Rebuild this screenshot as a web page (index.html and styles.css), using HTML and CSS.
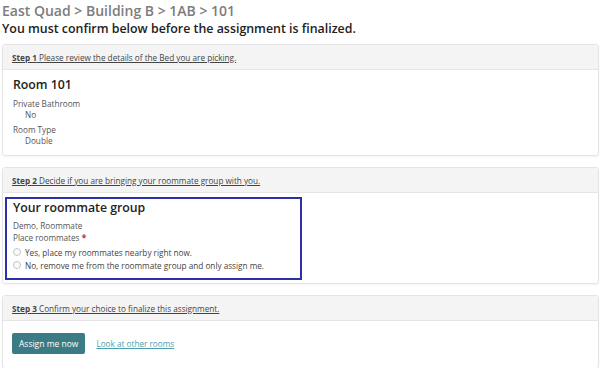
FILE: index.html
```html
<!DOCTYPE html>
<html lang="en">
<head>
  <meta charset="UTF-8">
  <title>Confirm room assignment</title>
  <link rel="stylesheet" href="styles.css">
</head>
<body>
  <h1 class="crumbs">East Quad &gt; Building B &gt; 1AB &gt; 101</h1>
  <h2 class="notice">You must confirm below before the assignment is finalized.</h2>

  <div class="panel">
    <div class="panel-head"><span><b>Step 1</b> Please review the details of the Bed you are picking.</span></div>
    <div class="panel-body room">
      <h3>Room 101</h3>
      <div class="label">Private Bathroom</div>
      <div class="value">No</div>
      <div class="label">Room Type</div>
      <div class="value">Double</div>
    </div>
  </div>

  <div class="panel">
    <div class="panel-head"><span><b>Step 2</b> Decide if you are bringing your roommate group with you.</span></div>
    <div class="panel-body group-body">
      <div class="group">
        <h3>Your roommate group</h3>
        <div class="label">Demo, Roommate</div>
        <div class="label">Place roommates <span class="req">*</span></div>
        <label class="radio first"><input type="radio" name="place"> Yes, place my roommates nearby right now.</label>
        <label class="radio"><input type="radio" name="place"> No, remove me from the roommate group and only assign me.</label>
      </div>
    </div>
  </div>

  <div class="panel">
    <div class="panel-head"><span><b>Step 3</b> Confirm your choice to finalize this assignment.</span></div>
    <div class="panel-body actions">
      <button class="btn">Assign me now</button>
      <a href="#" class="link">Look at other rooms</a>
    </div>
  </div>
</body>
</html>
```

FILE: styles.css
```css
body {
  margin: 0;
  padding: 2px 3px 0 2px;
  font-family: "Open Sans", sans-serif;
  color: #333;
  background: #fff;
}
.crumbs {
  margin: 0;
  font-size: 14px;
  font-weight: 600;
  color: #7d7d7d;
  line-height: 18px;
}
.notice {
  margin: 0 0 6px;
  font-size: 12.4px;
  font-weight: 600;
  color: #222;
  line-height: 18px;
}
.panel {
  border: 1px solid #e4e4e4;
  border-radius: 3px;
  box-shadow: 0 1px 2px rgba(0,0,0,0.05);
  margin-bottom: 11px;
}
.panel-head {
  background: #f4f4f4;
  border-bottom: 1px solid #e6e6e6;
  height: 24px;
  display: flex;
  align-items: center;
  padding: 0 9px;
  font-size: 8.2px;
  color: #444;
}
.panel-head span {
  text-decoration: underline;
}
h3 {
  margin: 0;
  font-size: 12.3px;
  font-weight: 600;
  color: #222;
  line-height: 16px;
}
.label {
  font-size: 8.2px;
  color: #555;
  line-height: 11px;
}
.value {
  font-size: 8.2px;
  color: #555;
  line-height: 11px;
  padding-left: 12px;
}
.room {
  padding: 7px 10px 9px;
}
.room h3 {
  margin-bottom: 5px;
}
.room .value + .label {
  margin-top: 4px;
}
.group-body {
  padding: 4px 0 3px 2px;
}
.group {
  box-sizing: border-box;
  width: 297px;
  border: 2px solid #2d31a6;
  padding: 1px 6px 6.5px;
}
.group h3 {
  margin-bottom: 4px;
}
.group .label {
  line-height: 12px;
}
.req {
  color: #c0262c;
  font-weight: bold;
}
.radio {
  display: flex;
  align-items: center;
  font-size: 8.2px;
  color: #444;
  line-height: 13px;
}
.radio.first {
  margin-top: 1.5px;
}
.radio input {
  appearance: none;
  margin: 0 4px 0 0;
  width: 8px;
  height: 8px;
  border: 1px solid #c4c4c4;
  border-radius: 50%;
  background: #fafafa;
}
.actions {
  display: flex;
  align-items: center;
  gap: 11px;
  padding: 12px 9px 14px;
}
.btn {
  background: #3b7b84;
  color: #fff;
  border: none;
  border-radius: 2px;
  font-family: inherit;
  font-size: 8.5px;
  height: 21px;
  padding: 0 7px;
}
.link {
  font-size: 8.2px;
  color: #4e9fad;
}
```
